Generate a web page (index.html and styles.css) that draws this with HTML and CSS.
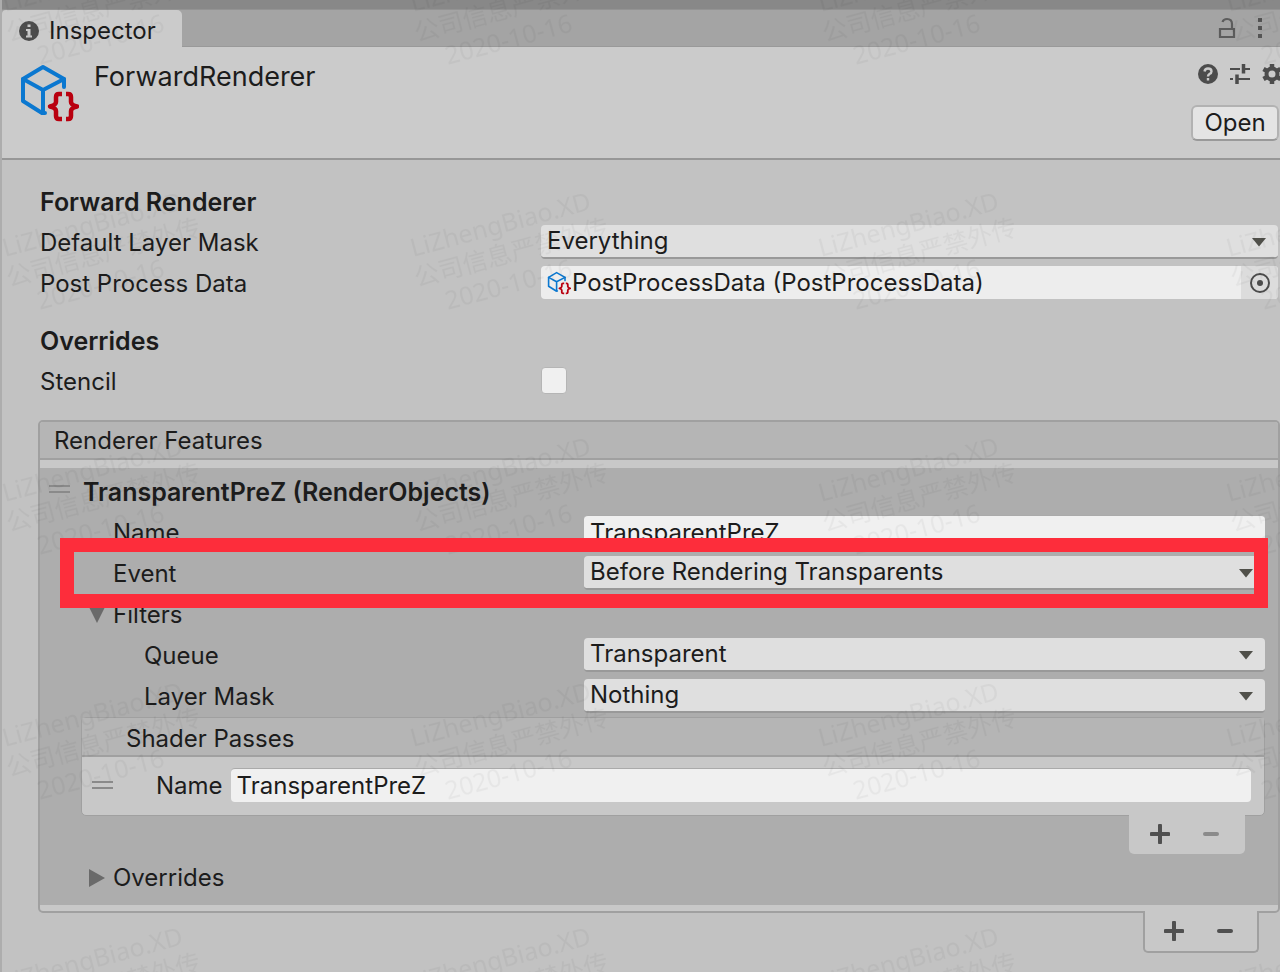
FILE: index.html
```html
<!DOCTYPE html>
<html lang="en">
<head>
<meta charset="utf-8">
<title>Inspector</title>
<link rel="stylesheet" href="styles.css">
</head>
<body>
<svg class="defs" width="0" height="0" aria-hidden="true">
  <symbol id="asset" viewBox="0 0 60 60">
    <g fill="none" stroke="#0b78d0" stroke-width="4" stroke-linejoin="round" stroke-linecap="round">
      <path d="M45 24V16L24 4 4 16V38L23 50H26"/>
      <path d="M4 16 24 27 45 16M24 27V50"/>
    </g>
    <g fill="none" stroke="#b9000f" stroke-width="4.500" stroke-linejoin="round">
      <path d="M43 31H40Q37 31 37 34V39Q37 42 31 43.500Q37 45 37 48V53Q37 56 40 56H43"/>
      <path d="M47 31H49Q52 31 52 34V39Q52 42 58 43.500Q52 45 52 48V53Q52 56 49 56H47"/>
    </g>
  </symbol>
  <symbol id="plus" viewBox="0 0 20 20"><path d="M10 1.500V18.500M1.500 10H18.500" stroke="#505050" stroke-width="4" stroke-linecap="round"/></symbol>
  <symbol id="minus" viewBox="0 0 20 20"><path d="M4 10H16" stroke="currentColor" stroke-width="4" stroke-linecap="round"/></symbol>
  <symbol id="caret" viewBox="0 0 16 10"><path d="M1 1H15L8 9.500Z" fill="#50504a"/></symbol>
</svg>

<div class="strip"></div>
<nav class="tabs">
  <button class="tab" type="button">
    <svg width="20" height="20" viewBox="0 0 20 20"><circle cx="10" cy="10" r="10" fill="#4c4c4c"/><path d="M8.500 3.500H11.500V6H8.500ZM7 8H11.500V14.500H13V16.500H7V14.500H8.500V10H7Z" fill="#cbcbcb"/></svg>
    Inspector
  </button>
  <div class="tab-tools">
    <button class="icon" type="button" aria-label="Lock"><svg width="18" height="22" viewBox="0 0 18 22"><path d="M2 12H16V20H2ZM4.500 5Q5.500 2 9 2Q14 2 14 7V12" fill="none" stroke="#5c5c5c" stroke-width="2.200"/></svg></button>
    <button class="icon" type="button" aria-label="Menu"><svg width="6" height="22" viewBox="0 0 6 22"><path d="M1 1H5V5H1ZM1 9H5V13H1ZM1 17H5V21H1Z" fill="#555"/></svg></button>
  </div>
</nav>

<header class="head">
  <svg class="head-icon" width="60" height="60"><use href="#asset"/></svg>
  <h1>ForwardRenderer</h1>
  <div class="head-side">
    <div class="head-tools">
      <button class="icon" type="button" aria-label="Help"><svg width="20" height="20" viewBox="0 0 20 20"><circle cx="10" cy="10" r="10" fill="#4c4c4c"/><path d="M6.500 7.500Q7 4.500 10 4.500Q13.500 4.500 13.500 7.500Q13.500 9 11.500 10Q10 11 10 12.500M10 14V16.500" fill="none" stroke="#cbcbcb" stroke-width="2.400"/></svg></button>
      <button class="icon" type="button" aria-label="Presets"><svg width="22" height="20" viewBox="0 0 22 20"><path d="M1 5H11M17 5H21M1 15H4M9 15H21" stroke="#4c4c4c" stroke-width="2"/><path d="M14.500 0V9.500M8 10.500V20" stroke="#4c4c4c" stroke-width="3.500"/><path d="M14 5H18M8 15H12" stroke="#4c4c4c" stroke-width="2"/></svg></button>
      <button class="icon" type="button" aria-label="Settings"><svg width="20" height="20" viewBox="0 0 20 20"><circle cx="10" cy="10" r="5.500" fill="none" stroke="#4c4c4c" stroke-width="4"/><path d="M10 0V4M10 16V20M1.500 5 5 7M15 13 18.500 15M18.500 5 15 7M5 13 1.500 15" stroke="#4c4c4c" stroke-width="4.500"/></svg></button>
    </div>
    <button class="open" type="button">Open</button>
  </div>
</header>

<main class="body">
  <section class="group">
    <h2>Forward Renderer</h2>
    <div class="row">
      <label for="mask">Default Layer Mask</label>
      <div class="drop"><select id="mask"><option>Everything</option></select><svg width="16" height="10"><use href="#caret"/></svg></div>
    </div>
    <div class="row">
      <label for="post">Post Process Data</label>
      <div class="object">
        <svg width="24" height="24"><use href="#asset"/></svg>
        <input id="post" value="PostProcessData (PostProcessData)" readonly>
        <button type="button" aria-label="Select object"><svg width="20" height="20" viewBox="0 0 20 20"><circle cx="10" cy="10" r="9" fill="none" stroke="#4c4c4c" stroke-width="2"/><circle cx="10" cy="10" r="3" fill="#4c4c4c"/></svg></button>
      </div>
    </div>
  </section>
  <section class="group">
    <h2>Overrides</h2>
    <div class="row">
      <label for="stencil">Stencil</label>
      <input class="check" id="stencil" type="checkbox">
    </div>
  </section>

  <section class="list">
    <div class="list-box">
      <div class="list-title">Renderer Features</div>
      <div class="feature">
        <div class="feature-head">
          <span class="grip"></span>
          <h2>TransparentPreZ (RenderObjects)</h2>
        </div>
        <div class="row">
          <label for="fname">Name</label>
          <input class="text" id="fname" value="TransparentPreZ">
        </div>
        <div class="row marked">
          <label for="event">Event</label>
          <div class="drop"><select id="event"><option>Before Rendering Transparents</option></select><svg width="16" height="10"><use href="#caret"/></svg></div>
        </div>
        <button class="fold" type="button"><svg width="18" height="18" viewBox="0 0 18 18"><path d="M1 1H17L9 17Z" fill="#6a6a6a"/></svg>Filters</button>
        <div class="row inner">
          <label for="queue">Queue</label>
          <div class="drop"><select id="queue"><option>Transparent</option></select><svg width="16" height="10"><use href="#caret"/></svg></div>
        </div>
        <div class="row inner">
          <label for="lmask">Layer Mask</label>
          <div class="drop"><select id="lmask"><option>Nothing</option></select><svg width="16" height="10"><use href="#caret"/></svg></div>
        </div>
        <div class="passes">
          <div class="passes-box">
            <div class="passes-title">Shader Passes</div>
            <div class="pass">
              <span class="grip"></span>
              <label for="pname">Name</label>
              <input class="text" id="pname" value="TransparentPreZ">
            </div>
          </div>
          <div class="foot">
            <button type="button" aria-label="Add pass"><svg width="20" height="20"><use href="#plus"/></svg></button>
            <button type="button" aria-label="Remove pass" disabled><svg width="20" height="20"><use href="#minus"/></svg></button>
          </div>
        </div>
        <button class="fold" type="button"><svg width="18" height="18" viewBox="0 0 18 18"><path d="M1 0V18L17 9Z" fill="#6a6a6a"/></svg>Overrides</button>
      </div>
    </div>
    <div class="foot outer">
      <button type="button" aria-label="Add feature"><svg width="20" height="20"><use href="#plus"/></svg></button>
      <button type="button" aria-label="Remove feature"><svg width="20" height="20"><use href="#minus"/></svg></button>
    </div>
  </section>
</main>

<svg class="watermark" aria-hidden="true">
  <defs>
    <pattern id="mark" width="408" height="245" patternUnits="userSpaceOnUse" x="-3" y="73">
      <g transform="translate(6 184) rotate(-15)">
        <text x="0" y="0">LiZhengBiao.XD</text>
        <text x="-4" y="30">公司信息严禁外传</text>
        <text x="20" y="60">2020-10-16</text>
      </g>
    </pattern>
  </defs>
  <rect width="100%" height="100%" fill="url(#mark)"/>
</svg>
</body>
</html>
```

FILE: styles.css
```css
* { box-sizing: border-box; }
html, body { margin: 0; min-height: 100%; }
body {
  position: relative;
  min-height: 100vh;
  overflow: hidden;
  background: #c2c2c2;
  border-left: 2px solid #adadad;
  color: #1c1c1c;
  font: 24px/41px Inter, "Liberation Sans", sans-serif;
}
button, input, select { font: inherit; color: inherit; margin: 0; }
button { border: 0; padding: 0; background: none; }
svg { display: block; flex: none; }
.defs { position: absolute; }
h1, h2 { margin: 0; line-height: 41px; }
h1 { font-size: 27px; font-weight: 400; }
h2 { padding-top: 1px; font-size: 25px; line-height: 40px; font-weight: 600; }

.strip { height: 10px; background: #888; border-bottom: 1px solid #939393; }
.tabs {
  display: flex;
  justify-content: space-between;
  height: 37px;
  background: #a4a4a4;
}
.tab {
  display: flex;
  align-items: center;
  gap: 10px;
  padding: 4px 26px 0 17px;
  background: #cbcbcb;
  border-radius: 4px 5px 0 0;
}
.tab-tools { display: flex; align-items: center; gap: 21px; padding-right: 17px; border-bottom: 1px solid #999; flex: 1; justify-content: flex-end; }

.head {
  display: flex;
  align-items: flex-start;
  height: 113px;
  background: #cbcbcb;
  border-bottom: 2px solid #979797;
}
.head-icon { margin: 16px 15px 0 17px; }
.head h1 { flex: 1; margin-top: 9px; }
.head-side { display: flex; flex-direction: column; align-items: flex-end; gap: 21px; padding-top: 17px; }
.head-tools { display: flex; gap: 11px; margin-right: -2px; }
.open {
  width: 88px;
  height: 36px;
  margin-right: 1px;
  line-height: 32px;
  background: #e4e4e4;
  border: 2px solid #b2b2b2;
  border-bottom-color: #999;
  border-radius: 6px;
}

.body { padding: 21px 0 0 36px; }
.group { padding: 0 2px 16px; }
.row { display: flex; align-items: flex-start; height: 41px; }
.group .row label { width: 501px; }
.drop, .text, .object {
  flex: 1;
  min-width: 0;
  height: 34px;
  margin-top: 3px;
  border-radius: 4px;
}
.drop { position: relative; background: #dfdfdf; border-bottom: 2px solid #999; }
.drop select {
  display: block;
  width: 100%;
  height: 32px;
  padding: 0 6px;
  line-height: 32px;
  appearance: none;
  border: 0;
  background: none;
}
.drop svg { position: absolute; right: 11px; top: 12px; pointer-events: none; }
.text { padding: 0 6px; background: #f0f0f0; border: 0; border-top: 1px solid #aaa; }
.object { display: flex; align-items: center; height: 33px; padding-left: 6px; background: #ededed; overflow: hidden; }
.object input { flex: 1; min-width: 0; padding: 0 1px; border: 0; background: none; }
.object button { display: grid; place-items: center; width: 37px; height: 33px; background: #dcdcdc; }
.check { appearance: none; width: 26px; height: 27px; margin-top: 6px; background: #f0f0f0; border: 1px solid #b5b5b5; border-radius: 4px; }

.list { margin-top: 2px; }
.list-box { background: #c8c8c8; border: 2px solid #a0a0a0; border-radius: 5px; padding-bottom: 6px; }
.list-title { height: 38px; line-height: 38px; padding-left: 14px; background: #b5b5b5; border-bottom: 2px solid #a0a0a0; border-radius: 3px 3px 0 0; }
.feature { margin-top: 8px; padding: 3px 13px 7px 41px; background: #adadad; }
.feature-head { display: flex; margin-left: -32px; gap: 13px; }
.grip { width: 21px; height: 8px; border: solid #8a8a8a; border-width: 2px 0; }
.feature-head .grip { margin-top: 14px; }
.feature-head h2 { flex: 1; }
.feature .row label { width: 503px; padding-left: 32px; }
.feature .inner label { padding-left: 63px; }
.marked { position: relative; z-index: 2; }
.marked::after {
  content: "";
  position: absolute;
  inset: -15px -3px -14px -21px;
  border: 14px solid #fd2d3b;
  pointer-events: none;
}
.fold { display: flex; align-items: center; gap: 7px; height: 41px; padding-left: 7px; }

.passes-box { background: #c8c8c8; border: 1px solid #a0a0a0; border-radius: 5px; }
.passes-title { height: 39px; padding-left: 44px; background: #b5b5b5; border-bottom: 2px solid #a0a0a0; }
.pass { display: flex; align-items: center; height: 58px; padding: 0 13px 2px 10px; }
.pass label { margin: 0 8px 0 43px; }
.pass .text { margin: 0; }
.foot { display: flex; align-items: center; justify-content: center; gap: 31px; width: 116px; height: 39px; margin: -1px 20px 3px auto; padding: 0 4px 2px 0; background: #c8c8c8; border-radius: 0 0 5px 5px; }
.foot button:disabled { color: #8b8b8b; }
.foot button { color: #505050; }
.outer { position: relative; height: 42px; margin: -2px 21px 0 auto; padding-bottom: 0; border: 2px solid #a0a0a0; border-top: 0; }

.watermark {
  position: absolute;
  inset: 0;
  width: 100%;
  height: 100%;
  pointer-events: none;
  fill: #000;
  opacity: 0.035;
  font: 25px "Noto Sans", "Noto Sans CJK SC", sans-serif;
}
```
